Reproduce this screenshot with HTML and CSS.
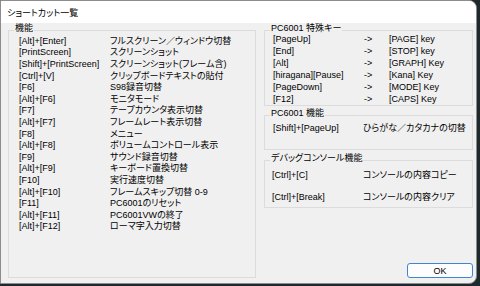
FILE: index.html
```html
<!DOCTYPE html>
<html lang="ja">
<head>
    <meta charset="UTF-8">
    <title>ショートカット一覧</title>
    <link rel="stylesheet" href="styles.css">
</head>
<body>
    <div class="window">
        <div class="titlebar">ショートカット一覧</div>
        <div class="content">
            <div class="group group--main">
                <div class="group-title">機能</div>
                <div class="rows rows--main">
                    <span>[Alt]+[Enter]</span><span>フルスクリーン／ウィンドウ切替</span>
                    <span>[PrintScreen]</span><span>スクリーンショット</span>
                    <span>[Shift]+[PrintScreen]</span><span>スクリーンショット(フレーム含)</span>
                    <span>[Ctrl]+[V]</span><span>クリップボードテキストの貼付</span>
                    <span>[F6]</span><span>S98録音切替</span>
                    <span>[Alt]+[F6]</span><span>モニタモード</span>
                    <span>[F7]</span><span>テープカウンタ表示切替</span>
                    <span>[Alt]+[F7]</span><span>フレームレート表示切替</span>
                    <span>[F8]</span><span>メニュー</span>
                    <span>[Alt]+[F8]</span><span>ボリュームコントロール表示</span>
                    <span>[F9]</span><span>サウンド録音切替</span>
                    <span>[Alt]+[F9]</span><span>キーボード置換切替</span>
                    <span>[F10]</span><span>実行速度切替</span>
                    <span>[Alt]+[F10]</span><span>フレームスキップ切替 0-9</span>
                    <span>[F11]</span><span>PC6001のリセット</span>
                    <span>[Alt]+[F11]</span><span>PC6001VWの終了</span>
                    <span>[Alt]+[F12]</span><span>ローマ字入力切替</span>
                </div>
            </div>

            <div class="side">
                <div class="group group--keys">
                    <div class="group-title">PC6001 特殊キー</div>
                    <div class="rows rows--keys">
                        <span>[PageUp]</span><span>-&gt;</span><span>[PAGE] key</span>
                        <span>[End]</span><span>-&gt;</span><span>[STOP] key</span>
                        <span>[Alt]</span><span>-&gt;</span><span>[GRAPH] Key</span>
                        <span>[hiragana][Pause]</span><span>-&gt;</span><span>[Kana] Key</span>
                        <span>[PageDown]</span><span>-&gt;</span><span>[MODE] Key</span>
                        <span>[F12]</span><span>-&gt;</span><span>[CAPS] Key</span>
                    </div>
                </div>

                <div class="group group--func">
                    <div class="group-title">PC6001 機能</div>
                    <div class="rows rows--func">
                        <span>[Shift]+[PageUp]</span><span>ひらがな／カタカナの切替</span>
                    </div>
                </div>

                <div class="group group--debug">
                    <div class="group-title">デバッグコンソール機能</div>
                    <div class="rows rows--debug">
                        <span>[Ctrl]+[C]</span><span>コンソールの内容コピー</span>
                        <span>[Ctrl]+[Break]</span><span>コンソールの内容クリア</span>
                    </div>
                </div>

                <button class="btn-ok">OK</button>
            </div>
        </div>
    </div>
</body>
</html>
```

FILE: styles.css
```css
/* Fenêtre */
body {
    margin: 0;
    background: #1e292b;
    font: 9px "Liberation Sans", "Noto Sans CJK JP", sans-serif;
    font-feature-settings: "palt";
    color: #000;
}

.window {
    width: 477px;
    height: 284px;
    box-sizing: border-box;
    border: 1px solid #8c8c8c;
    border-radius: 0 8px 8px 0;
    background: #f0f0f0;
    display: flex;
    flex-direction: column;
    overflow: hidden;
}

.titlebar {
    flex: none;
    height: 22px;
    padding: 1px 0 0 6px;
    box-sizing: border-box;
    background: #fff;
    display: flex;
    align-items: center;
}

.content {
    flex: 1;
    display: grid;
    grid-template-columns: 248px 209px;
    column-gap: 8px;
    padding: 7px 3px 5px 7px;
}

/* Groupes */
.group {
    border: 1px solid #dcdcdc;
}

.group-title {
    display: table;
    margin: -8px 0 0 5px;
    padding: 0 1px;
    line-height: 10px;
    background: #f0f0f0;
}

.rows { display: grid; }

.rows--main {
    grid-template-columns: 91px 1fr;
    grid-auto-rows: 11.6px;
    line-height: 11.6px;
    padding: 2.8px 0 0 10px;
}

.side {
    display: flex;
    flex-direction: column;
}

.rows--keys {
    grid-template-columns: 91px 25px 1fr;
    grid-auto-rows: 12px;
    line-height: 12px;
    padding-left: 8px;
}

.group--func { margin-top: 9px; }
.rows--func {
    grid-template-columns: 90px 1fr;
    line-height: 12px;
    padding: 4px 0 15px 8px;
}

.group--debug { margin-top: 10px; }
.rows--debug {
    grid-template-columns: 91px 1fr;
    grid-auto-rows: 12px;
    row-gap: 10px;
    line-height: 12px;
    padding: 6px 0 4px 7px;
}

.btn-ok {
    margin-top: auto;
    align-self: flex-end;
    width: 66px;
    height: 15px;
    padding: 0;
    border: 1px solid #3c86d6;
    border-radius: 3px;
    background: #fdfdfd;
    font: inherit;
    color: #000;
}
```
